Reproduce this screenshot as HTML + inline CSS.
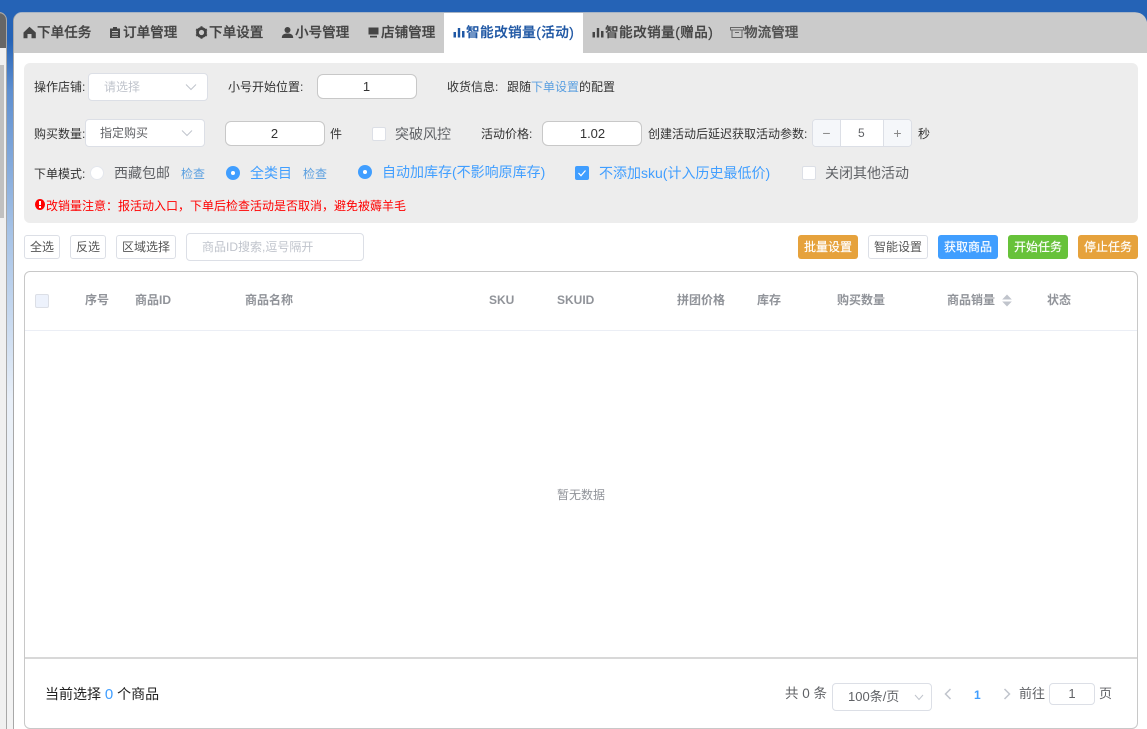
<!DOCTYPE html>
<html><head><meta charset="utf-8">
<style>
html,body{margin:0;padding:0;width:1147px;height:729px;overflow:hidden;background:#fff}
body{position:relative;font-family:"Liberation Sans","Noto Sans CJK SC",sans-serif;font-size:12px;color:#333}
.a{position:absolute;box-sizing:border-box;white-space:nowrap}
.t{position:absolute;white-space:nowrap;line-height:16px}
.tab{position:absolute;top:13px;height:40px;line-height:40px;font-size:13.6px;font-weight:500;color:#444;white-space:nowrap;-webkit-text-stroke:.25px #444}
.tab svg{position:absolute;top:13px;left:0}
.box{position:absolute;box-sizing:border-box;background:#fff;border:1px solid #dcdfe6;border-radius:4px}
.inp{position:absolute;box-sizing:border-box;background:#fff;border:1px solid #c8c8c8;border-radius:6px;text-align:center;font-size:13px;color:#333;height:25px;line-height:23px}
.btn{position:absolute;box-sizing:border-box;top:235px;height:24px;line-height:22px;border-radius:3px;font-size:12px;text-align:center;color:#fff;border:1px solid transparent;-webkit-text-stroke:.15px #fff}
.btnw{background:#fff;border:1px solid #dcdfe6;color:#555;-webkit-text-stroke:0}
.th{position:absolute;top:292px;font-size:12px;font-weight:700;color:#909399;line-height:16px;white-space:nowrap}
.blue{color:#409eff}
.lnk{color:#5a9fe0}
.g{color:#606266}
.o{font-size:14px}
</style></head><body>
<div class="a" style="left:0;top:0;width:1147px;height:729px;background:linear-gradient(180deg,#2563b6 0,#2563b6 40px,#5e8fd0 90px,#a5c2e6 230px,#e8eff8 400px,#f3f3f3 560px)"></div>
<div class="a" style="left:0;top:0;width:1147px;height:12px;background:#2563b6"></div>
<div class="a" style="left:-20px;top:12px;width:27px;height:730px;background:#f0f0f0;border:1px solid #a8a8a8;border-radius:0 8px 0 0"></div>
<div class="a" style="left:-20px;top:13px;width:26px;height:35px;background:#666;border-radius:0 7px 0 0"></div>
<div class="a" style="left:0;top:65px;width:4px;height:153px;background:#c0c0c0"></div>
<div class="a" style="left:13px;top:12px;width:1140px;height:730px;background:#fff;border-left:1px solid #a8a8a8;border-top:1px solid #a8b4c4;border-radius:9px 9px 0 0;overflow:hidden">
  <div class="a" style="left:0;top:0;width:1140px;height:40px;background:#cbcbcb"></div>
  <div class="a" style="left:430px;top:0;width:139px;height:40px;background:#fff"></div>
</div>
<svg class="a" style="left:1135px;top:10px" width="12" height="12" viewBox="0 0 12 12"><path d="M0 0H12V12Q10 3 0 2Z" fill="#2563b6"/></svg>

<div class="tab" style="left:23px;padding-left:14px"><svg width="13" height="13" viewBox="0 0 13 13"><path d="M6.500 .8L12.800 6.500V12.200H8.500V8H4.500V12.200H.5V6.500Z" fill="#444"/></svg>下单任务</div>
<div class="tab" style="left:109px;padding-left:14px"><svg width="12" height="13" viewBox="0 0 12 13"><path d="M1 2.500H4V1H8V2.500H11V12H1ZM3 5V6H9V5ZM3 7.500V8.500H9V7.500ZM3 10V10.800H9V10Z" fill="#444" fill-rule="evenodd"/></svg>订单管理</div>
<div class="tab" style="left:195px;padding-left:14px"><svg width="13" height="13" viewBox="0 0 13 13"><circle cx="6.500" cy="6.500" r="4" fill="none" stroke="#444" stroke-width="2.800"/><path d="M6.500 .3V12.700M1.100 3.400L11.900 9.600M1.100 9.600L11.900 3.400" stroke="#444" stroke-width="2" stroke-dasharray="2 8.400"/></svg>下单设置</div>
<div class="tab" style="left:281px;padding-left:14px"><svg width="13" height="13" viewBox="0 0 13 13"><circle cx="6.500" cy="4" r="3" fill="#444"/><path d="M.8 12C.8 8.500 3 7.500 6.500 7.500S12.200 8.500 12.200 12Z" fill="#444"/></svg>小号管理</div>
<div class="tab" style="left:367px;padding-left:14px"><svg width="13" height="13" viewBox="0 0 13 13"><path d="M1.500 1.500H11.500V8.500H1.500ZM3 9.700H10V11.500H3Z" fill="#444"/></svg>店铺管理</div>
<div class="tab" style="left:453px;padding-left:13px;letter-spacing:.45px;color:#1f57a4;-webkit-text-stroke:.25px #1f57a4"><svg width="12" height="13" viewBox="0 0 12 13"><path d="M.5 6H3V11.500H.5ZM4.800 2H7.200V11.500H4.800ZM9 5H11.500V11.500H9Z" fill="#1f57a4"/></svg>智能改销量(活动)</div>
<div class="tab" style="left:592px;padding-left:13px;letter-spacing:.45px"><svg width="12" height="13" viewBox="0 0 12 13"><path d="M.5 6H3V11.500H.5ZM4.800 2H7.200V11.500H4.800ZM9 5H11.500V11.500H9Z" fill="#444"/></svg>智能改销量(赠品)</div>
<div class="tab" style="left:730px;padding-left:14px;color:#555"><svg width="14" height="13" viewBox="0 0 14 13"><path d="M.5 1.500H13.500V4H.5ZM2 4V11.500H12V4M5 6.500H9" fill="none" stroke="#666"/></svg>物流管理</div>

<div class="a" style="left:24px;top:63px;width:1114px;height:160px;background:#ededed;border-radius:6px"></div>

<div class="t" style="left:34px;top:79px">操作店铺:</div>
<div class="box" style="left:88px;top:73px;width:120px;height:28px"></div>
<div class="t" style="left:104px;top:79px;color:#c0c4cc">请选择</div>
<svg class="a" style="left:185px;top:83px" width="12" height="8" viewBox="0 0 12 8"><path d="M1 1.500L6 6.500L11 1.500" fill="none" stroke="#c0c4cc"/></svg>
<div class="t" style="left:228px;top:79px">小号开始位置:</div>
<div class="inp" style="left:317px;top:74px;width:100px;padding-right:1px">1</div>
<div class="t" style="left:447px;top:79px">收货信息:</div>
<div class="t" style="left:507px;top:79px">跟随<span class="lnk">下单设置</span>的配置</div>

<div class="t" style="left:34px;top:126px">购买数量:</div>
<div class="box" style="left:85px;top:119px;width:120px;height:28px"></div>
<div class="t g" style="left:100px;top:125px">指定购买</div>
<svg class="a" style="left:181px;top:129px" width="12" height="8" viewBox="0 0 12 8"><path d="M1 1.500L6 6.500L11 1.500" fill="none" stroke="#c0c4cc"/></svg>
<div class="inp" style="left:225px;top:121px;width:100px;padding-right:1px">2</div>
<div class="t" style="left:330px;top:126px">件</div>
<div class="box" style="left:372px;top:127px;width:14px;height:14px;border-radius:2px"></div>
<div class="t g o" style="left:395px;top:126px">突破风控</div>
<div class="t" style="left:481px;top:126px">活动价格:</div>
<div class="inp" style="left:542px;top:121px;width:100px;padding-left:1px">1.02</div>
<div class="t" style="left:648px;top:126px">创建活动后延迟获取活动参数:</div>
<div class="box" style="left:812px;top:119px;width:100px;height:28px"></div>
<div class="a" style="left:813px;top:120px;width:28px;height:26px;background:#f5f7fa;border-right:1px solid #dcdfe6;border-radius:3px 0 0 3px;text-align:center;line-height:27px;font-size:14px;color:#888">−</div>
<div class="a" style="left:883px;top:120px;width:28px;height:26px;background:#f5f7fa;border-left:1px solid #dcdfe6;border-radius:0 3px 3px 0;text-align:center;line-height:27px;font-size:14px;color:#888">+</div>
<div class="t g" style="left:858px;top:125px">5</div>
<div class="t" style="left:918px;top:126px">秒</div>

<div class="t" style="left:34px;top:166px">下单模式:</div>
<div class="a" style="left:90px;top:166px;width:14px;height:14px;background:#fff;border:1px solid #e4e7ed;border-radius:50%"></div>
<div class="t g o" style="left:114px;top:165px">西藏包邮</div>
<div class="t lnk" style="left:181px;top:166px">检查</div>
<div class="a" style="left:226px;top:166px;width:14px;height:14px;background:#409eff;border-radius:50%"></div>
<div class="a" style="left:231px;top:171px;width:4px;height:4px;background:#fff;border-radius:50%"></div>
<div class="t blue o" style="left:250px;top:165px">全类目</div>
<div class="t lnk" style="left:303px;top:166px">检查</div>
<div class="a" style="left:358px;top:165px;width:14px;height:14px;background:#409eff;border-radius:50%"></div>
<div class="a" style="left:363px;top:170px;width:4px;height:4px;background:#fff;border-radius:50%"></div>
<div class="t blue o" style="left:382px;top:164px">自动加库存(不影响原库存)</div>
<div class="a" style="left:575px;top:166px;width:14px;height:14px;background:#409eff;border-radius:2px"></div>
<svg class="a" style="left:575px;top:166px" width="14" height="14" viewBox="0 0 14 14"><path d="M3.500 7L6 9.700L10.500 4.500" fill="none" stroke="#fff" stroke-width="1.200"/></svg>
<div class="t blue o" style="left:599px;top:165px">不添加sku(计入历史最低价)</div>
<div class="box" style="left:802px;top:166px;width:14px;height:14px;border-radius:2px"></div>
<div class="t g o" style="left:825px;top:165px">关闭其他活动</div>

<div class="a" style="left:35px;top:199px;width:10px;height:11px;background:#f00;border-radius:50%"></div>
<div class="a" style="left:39px;top:201px;width:2px;height:4px;background:#fff"></div>
<div class="a" style="left:39px;top:206px;width:2px;height:2px;background:#fff"></div>
<div class="t" style="left:46px;top:198px;color:#f00">改销量注意：报活动入口，下单后检查活动是否取消，避免被薅羊毛</div>

<div class="btn btnw" style="left:24px;width:36px">全选</div>
<div class="btn btnw" style="left:70px;width:36px">反选</div>
<div class="btn btnw" style="left:116px;width:60px">区域选择</div>
<div class="box" style="left:186px;top:233px;width:178px;height:28px"></div>
<div class="t" style="left:202px;top:239px;color:#c0c4cc">商品ID搜索,逗号隔开</div>

<div class="btn" style="left:798px;width:60px;background:#e6a23c">批量设置</div>
<div class="btn btnw" style="left:868px;width:60px">智能设置</div>
<div class="btn" style="left:938px;width:60px;background:#409eff">获取商品</div>
<div class="btn" style="left:1008px;width:60px;background:#67c23a">开始任务</div>
<div class="btn" style="left:1078px;width:60px;background:#e6a23c">停止任务</div>

<div class="a" style="left:24px;top:271px;width:1114px;height:458px;border:1px solid #c8c8c8;border-radius:6px;background:#fff"></div>
<div class="a" style="left:25px;top:330px;width:1112px;height:1px;background:#ebeef5"></div>
<div class="a" style="left:25px;top:657px;width:1112px;height:2px;background:#d8d8d8"></div>
<div class="a" style="left:35px;top:294px;width:14px;height:14px;background:#edf2fc;border:1px solid #dcdfe6;border-radius:2px"></div>
<div class="th" style="left:85px">序号</div>
<div class="th" style="left:135px">商品ID</div>
<div class="th" style="left:245px">商品名称</div>
<div class="th" style="left:489px">SKU</div>
<div class="th" style="left:557px">SKUID</div>
<div class="th" style="left:677px">拼团价格</div>
<div class="th" style="left:757px">库存</div>
<div class="th" style="left:837px">购买数量</div>
<div class="th" style="left:947px">商品销量</div>
<svg class="a" style="left:1002px;top:294px" width="10" height="13" viewBox="0 0 10 13"><path d="M5 0.500L9.800 5.500H.2ZM5 12.500L9.800 7.500H.2Z" fill="#c0c4cc"/></svg>
<div class="th" style="left:1047px">状态</div>
<div class="t" style="left:557px;top:487px;color:#909399">暂无数据</div>

<div class="t o" style="left:45px;top:686px;color:#222">当前选择 <span class="blue" style="font-size:15px">0</span> 个商品</div>
<div class="t g" style="left:785px;top:686px;font-size:13.5px">共 0 条</div>
<div class="box" style="left:832px;top:683px;width:100px;height:28px"></div>
<div class="t g" style="left:848px;top:689px;font-size:13px">100条/页</div>
<svg class="a" style="left:914px;top:694px" width="10" height="7" viewBox="0 0 10 7"><path d="M1 1L5 5.500L9 1" fill="none" stroke="#c0c4cc"/></svg>
<svg class="a" style="left:944px;top:688px" width="8" height="12" viewBox="0 0 8 12"><path d="M6.500 1L1.500 6L6.500 11" fill="none" stroke="#c0c4cc" stroke-width="1.500"/></svg>
<div class="t" style="left:974px;top:687px;font-weight:700;color:#409eff">1</div>
<svg class="a" style="left:1003px;top:688px" width="8" height="12" viewBox="0 0 8 12"><path d="M1.500 1L6.500 6L1.500 11" fill="none" stroke="#c0c4cc" stroke-width="1.500"/></svg>
<div class="t g" style="left:1019px;top:686px;font-size:13px">前往</div>
<div class="box" style="left:1049px;top:683px;width:46px;height:22px;text-align:center;line-height:20px;font-size:13px;color:#606266">1</div>
<div class="t g" style="left:1099px;top:686px;font-size:13px">页</div>
</body></html>
